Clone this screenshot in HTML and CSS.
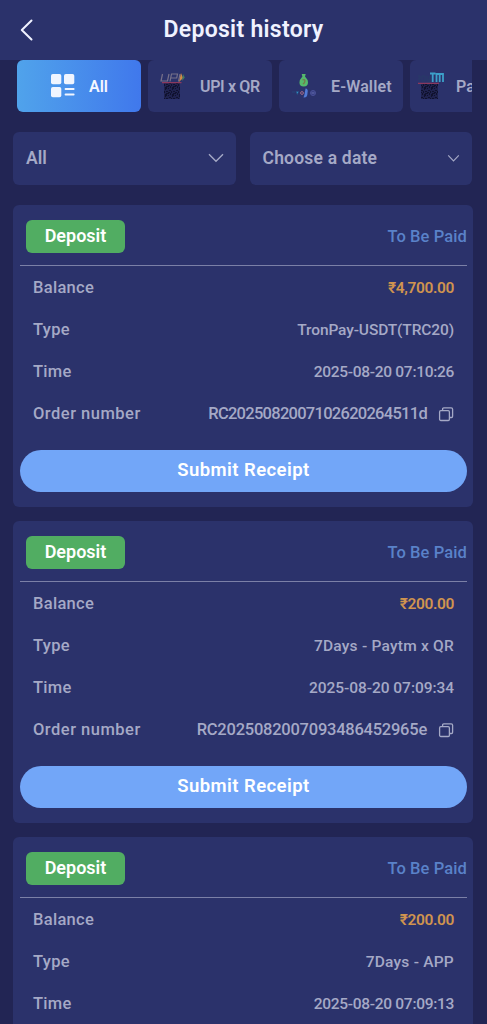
FILE: index.html
```html
<!DOCTYPE html>
<html lang="en">
<head>
<meta charset="utf-8">
<title>Deposit history</title>
<link rel="stylesheet" href="styles.css">
</head>
<body>
<svg width="0" height="0" class="defs">
  <defs>
    <pattern id="modules" width="7" height="7" patternUnits="userSpaceOnUse">
      <rect width="7" height="7" fill="#1f224e"/>
      <path d="M0 0h3v1H1v2H0zM4 0h1v2H4zM6 1h1v3H6zM2 2h1v1H2zM3 4h2v1H3zM0 5h2v1H0zM5 5h1v2H5zM2 6h2v1H2z" fill="#10122f"/>
    </pattern>
    <symbol id="copy" viewBox="0 0 16 16">
      <rect x="1.6" y="4.7" width="9.8" height="9.8" rx="1.2"/>
      <path d="M4.6 4.5V3q0-1.2 1.2-1.2h7.4q1.4 0 1.4 1.4v7q0 1.3-1.2 1.3h-1.8"/>
    </symbol>
  </defs>
</svg>
<header class="topbar">
  <svg class="back" viewBox="0 0 14 22"><path d="M11.5 1.5L1.8 11l9.7 9.5"/></svg>
  <h1 class="title">Deposit history</h1>
</header>
<nav class="tabs">
  <div class="tab active">
    <svg class="tab-icon grid-icon" viewBox="0 0 26 26"><rect x="1" y="1" width="10.3" height="10.3" rx="1.8"/><rect x="14" y="1" width="10.3" height="10.3" rx="1.8"/><rect x="1" y="14" width="10.3" height="10.3" rx="1.8"/><path d="M15.5 16h8.2M15.5 21.5h8.2"/></svg>
    <span class="tab-label label-all">All</span>
  </div>
  <div class="tab">
    <svg class="tab-icon" viewBox="0 0 26 28">
      <rect x="5" y="11" width="16" height="16" fill="url(#modules)"/>
      <path d="M3.5 2L2 9h6.5L10 2M11 9.5L12.5 2h6l-.8 4h-5.5M21 2l-1.5 7.5" fill="none" stroke="#77718a" stroke-width="1.2"/>
      <path d="M22 1l2 5-4 4z" fill="#d08b45"/><path d="M24 2l1.8 3.5L23 9z" fill="#427a66"/>
      <path d="M3 10.7h19.5" stroke="#a33b5c" stroke-width="1"/>
    </svg>
    <span class="tab-label label-upi">UPI x QR</span>
  </div>
  <div class="tab">
    <svg class="tab-icon" viewBox="0 0 26 28">
      <path d="M11.7 2h4L15 4.5q3 3 3 6 0 4-4.3 4t-4.2-4q0-3 2.9-6z" fill="#55b96c"/>
      <path d="M12.5 8q3-1 2.3 1.5t-2 2" fill="none" stroke="#77794a" stroke-width="1.3"/>
      <path d="M2 20h3M6 19.5l1.3 3 1.3-3z" fill="#36a4d7" stroke="#25477c" stroke-width=".7"/>
      <circle cx="12" cy="21" r="1.4" fill="none" stroke="#a06a87" stroke-width="1"/>
      <path d="M15.5 16.5q3 0 2 4.5 0 5-4 4.5l1-3z" fill="#527bd6"/>
      <circle cx="23" cy="21" r="2.5" fill="#373e83" stroke="#4b5299" stroke-width="1"/><path d="M21.5 21h3" stroke="#6870af"/>
    </svg>
    <span class="tab-label label-wallet">E-Wallet</span>
  </div>
  <div class="tab tab-last">
    <svg class="tab-icon" viewBox="0 0 26 28">
      <rect x="3" y="12" width="17" height="15" fill="url(#modules)"/>
      <path d="M-1 9V4h3v3h-3M4 9V4h3v5H4M9 4v4h3V4M12 4v6H9" fill="none" stroke="#293b69"/>
      <path d="M12 1.5h5.5M14.7 1.5V10M18.5 10V2H25v8M21.7 2v8" fill="none" stroke="#3c9fc9" stroke-width="1.8"/>
      <path d="M0 11.3h21" stroke="#a33b5c"/>
    </svg>
    <span class="tab-label label-paytm">Paytm</span>
  </div>
</nav>
<section class="filters">
  <div class="select"><span class="select-all">All</span><svg class="chevron" viewBox="0 0 16 10"><path d="M1 1.2l7 7 7-7"/></svg></div>
  <div class="select"><span class="select-date">Choose a date</span><svg class="chevron small" viewBox="0 0 16 10"><path d="M1.5 1.2L8 8l6.5-6.8"/></svg></div>
</section>
<main class="orders">
  <article class="card">
    <div class="card-head"><span class="badge">Deposit</span><span class="status">To Be Paid</span></div>
    <div class="row"><span class="key">Balance</span><span class="value amount">₹4,700.00</span></div>
    <div class="row"><span class="key">Type</span><span class="value type-tron">TronPay-USDT(TRC20)</span></div>
    <div class="row"><span class="key">Time</span><span class="value time narrow">2025-08-20 07:10:26</span></div>
    <div class="row"><span class="key order-key">Order number</span><span class="order"><span class="value code code-a">RC2025082007102620264511d</span><svg class="copy"><use href="#copy"/></svg></span></div>
    <button class="submit">Submit Receipt</button>
  </article>
  <article class="card">
    <div class="card-head"><span class="badge">Deposit</span><span class="status">To Be Paid</span></div>
    <div class="row"><span class="key">Balance</span><span class="value amount">₹200.00</span></div>
    <div class="row"><span class="key">Type</span><span class="value type-days">7Days - Paytm x QR</span></div>
    <div class="row"><span class="key">Time</span><span class="value time">2025-08-20 07:09:34</span></div>
    <div class="row"><span class="key order-key">Order number</span><span class="order"><span class="value code code-b">RC2025082007093486452965e</span><svg class="copy"><use href="#copy"/></svg></span></div>
    <button class="submit">Submit Receipt</button>
  </article>
  <article class="card">
    <div class="card-head"><span class="badge">Deposit</span><span class="status">To Be Paid</span></div>
    <div class="row"><span class="key">Balance</span><span class="value amount">₹200.00</span></div>
    <div class="row"><span class="key">Type</span><span class="value type-days">7Days - APP</span></div>
    <div class="row"><span class="key">Time</span><span class="value time narrow">2025-08-20 07:09:13</span></div>
  </article>
</main>
</body>
</html>
```
FILE: styles.css
```css
* { box-sizing: border-box; }
body {
  margin: 0;
  height: 1024px;
  overflow: hidden;
  background: #222554;
  color: #a5a9c6;
  font-family: Roboto, "Noto Sans", sans-serif;
  font-weight: 500;
}
.defs { display: block; height: 0; }
.topbar {
  height: 60px;
  padding: 0 20px;
  display: grid;
  grid-template-columns: 14px 1fr 14px;
  align-items: center;
  background: #2b326b;
}
.back { width: 14px; height: 22px; fill: none; stroke: #f0f2ff; stroke-width: 2; stroke-linecap: round; stroke-linejoin: round; }
.title { margin: 0; padding-bottom: 1px; font-size: 23px; font-weight: 600; line-height: 28px; text-align: center; color: #f0f2ff; letter-spacing: .3px; }
.tabs { display: flex; gap: 7px; margin: 0 15px 0 17px; overflow: hidden; }
.tab {
  flex: 0 0 124px;
  height: 52px;
  padding-left: 11px;
  border-radius: 6px;
  display: flex;
  align-items: center;
  gap: 15px;
  background: #2b326b;
  font-size: 16px;
  font-weight: 600;
  white-space: nowrap;
}
.tab.active { background: linear-gradient(90deg, #50a3eb, #4078ec); color: #f4f7ff; padding-left: 33px; gap: 13px; }
.tab-last { padding-left: 8px; gap: 12px; }
.label-upi { letter-spacing: -.35px; }
.label-wallet { letter-spacing: .15px; }
.tab-icon { width: 26px; height: 28px; flex: none; }
.grid-icon { height: 26px; fill: #f0f5ff; stroke: none; }
.grid-icon path { stroke: #f0f5ff; stroke-width: 1.8; stroke-linecap: round; }
.filters { display: grid; grid-template-columns: 1fr 1fr; gap: 14px; padding: 20px 15px 0 13px; }
.select {
  height: 53px;
  padding: 0 12px 1px 13px;
  border-radius: 6px;
  display: flex;
  align-items: center;
  justify-content: space-between;
  background: #2b326b;
  font-size: 17.5px;
  font-weight: 600;
}
.select-date { letter-spacing: .2px; }
.chevron { width: 16px; height: 10px; fill: none; stroke: #a5a9c6; stroke-width: 1.4; }
.chevron.small { width: 13px; height: 9px; }
.orders { padding: 20px 14px 0 13px; }
.card { height: 302px; margin-bottom: 14px; padding: 0 6px 0 7px; border-radius: 6px; background: #2b326b; }
.card:last-child { height: 187px; margin-bottom: 0; border-radius: 6px 6px 0 0; }
.card-head {
  height: 61px;
  padding: 2px 0 0 6px;
  border-bottom: 1px solid #7b80a7;
  display: flex;
  align-items: center;
  justify-content: space-between;
}
.badge { width: 99px; height: 33px; border-radius: 6px; background: #51ad62; color: #fff; font-size: 18px; font-weight: 600; line-height: 32px; text-align: center; }
.status { color: #5a82c9; font-size: 16.5px; letter-spacing: .1px; }
.row { height: 42px; padding: 1px 13px 0; display: flex; align-items: center; justify-content: space-between; }
.key { font-size: 16.5px; letter-spacing: .3px; }
.order-key { letter-spacing: .5px; }
.value { font-size: 15.5px; white-space: nowrap; }
.amount { color: #d0944f; font-weight: 600; letter-spacing: -.38px; }
.type-tron { letter-spacing: -.12px; }
.type-days { letter-spacing: .23px; }
.time { letter-spacing: -.05px; }
.time.narrow { letter-spacing: -.3px; }
.order { display: flex; align-items: center; gap: 11px; }
.code { font-size: 16.5px; }
.code-a { letter-spacing: -.72px; }
.code-b { letter-spacing: -.24px; }
.copy { width: 16px; height: 16px; fill: none; stroke: #a5a9c6; stroke-width: 1.3; }
.submit {
  display: block;
  width: 100%;
  height: 42px;
  margin-top: 16px;
  padding: 0 0 2px;
  border: 0;
  border-radius: 21px;
  background: #72a6f8;
  color: #fff;
  font: 600 18.5px Roboto, sans-serif;
  letter-spacing: .42px;
}
```
